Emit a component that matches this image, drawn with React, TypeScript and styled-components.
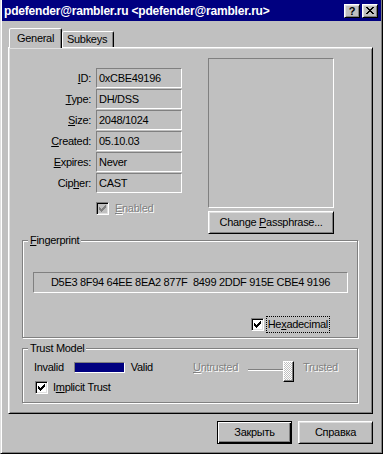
import React from "react";
import styled, { createGlobalStyle } from "styled-components";

const GlobalStyle = createGlobalStyle`
  html, body {
    margin: 0;
    padding: 0;
    background: #c0c0c0;
  }
  body {
    font-family: "Liberation Sans", Arial, sans-serif;
    font-size: 11px;
    letter-spacing: -0.3px;
    color: #000;
  }
  u {
    text-underline-offset: 1px;
  }
`;

const Window = styled.div`
  box-sizing: border-box;
  width: 383px;
  height: 454px;
  display: flex;
  flex-direction: column;
  background: #c0c0c0;
  border-left: 1px solid #dfdfdf;
  border-right: 1px solid #000;
  border-bottom: 1px solid #000;
  box-shadow: inset 1px 0 #fff, inset -1px -1px #808080;
  padding: 0 1px 1px 1px;
`;

const TitleBar = styled.div`
  height: 21px;
  display: flex;
  align-items: center;
  background: #000080;
  color: #fff;
  padding: 0 3px 0 2px;
`;

const Title = styled.span`
  font-weight: bold;
  font-size: 12px;
  letter-spacing: -0.2px;
  white-space: nowrap;
`;

const CaptionButtons = styled.div`
  margin-left: auto;
  display: flex;
  gap: 2px;
`;

const CaptionButton = styled.div`
  box-sizing: border-box;
  width: 16px;
  height: 14px;
  display: flex;
  align-items: center;
  justify-content: center;
  background: #c0c0c0;
  color: #000;
  font-weight: bold;
  font-size: 11px;
  border: 1px solid;
  border-color: #fff #000 #000 #fff;
  box-shadow: inset 1px 1px #dfdfdf, inset -1px -1px #808080;
`;

const Body = styled.div`
  flex: 1;
  display: flex;
  flex-direction: column;
  padding: 7px 8px 0 6px;
`;

const TabStrip = styled.div`
  height: 19px;
  display: flex;
  align-items: flex-end;
  padding-left: 1px;
`;

const Tab = styled.div<{ $active?: boolean; $width: number; $pad: number }>`
  box-sizing: border-box;
  width: ${(p) => p.$width}px;
  height: ${(p) => (p.$active ? 20 : 16)}px;
  margin-bottom: ${(p) => (p.$active ? -1 : 0)}px;
  position: relative;
  z-index: ${(p) => (p.$active ? 1 : 0)};
  padding: ${(p) => (p.$active ? 3 : 1)}px 0 0 ${(p) => p.$pad}px;
  line-height: 13px;
  background: #c0c0c0;
  border: 1px solid;
  border-bottom: none;
  border-color: #fff #000 transparent #fff;
  border-radius: 2px 2px 0 0;
  box-shadow: inset -1px 0 #808080;
`;

const Panel = styled.div`
  box-sizing: border-box;
  width: 365px;
  height: 367px;
  border: 1px solid;
  border-color: #fff #000 #000 #fff;
  box-shadow: inset 1px 1px #dfdfdf, inset -1px -1px #808080;
  padding: 10px 14px 0 13px;
`;

const TopRow = styled.div`
  display: flex;
`;

const InfoColumn = styled.div`
  width: 186px;
  display: flex;
  flex-direction: column;
`;

const FieldGrid = styled.div`
  margin-top: 10px;
  display: grid;
  grid-template-columns: 69px 86px;
  grid-auto-rows: 20px;
  column-gap: 5px;
  row-gap: 1px;
`;

const FieldLabel = styled.span`
  align-self: center;
  text-align: right;
  line-height: 13px;
  white-space: nowrap;
`;

const Field = styled.div<{ $center?: boolean }>`
  box-sizing: border-box;
  display: flex;
  align-items: center;
  justify-content: ${(p) => (p.$center ? "center" : "flex-start")};
  padding: 0 2px;
  line-height: 13px;
  white-space: pre;
  border: 1px solid;
  border-color: #808080 #fff #fff #808080;
`;

const CheckRow = styled.div<{ $gap: number }>`
  display: flex;
  align-items: center;
  gap: ${(p) => p.$gap}px;
  line-height: 13px;
`;

const EnabledRow = styled(CheckRow)`
  margin: 9px 0 0 74px;
`;

const ImplicitRow = styled(CheckRow)`
  margin-left: 1px;
`;

const Box = styled.span<{ $disabled?: boolean }>`
  box-sizing: border-box;
  width: 13px;
  height: 13px;
  display: flex;
  align-items: center;
  justify-content: center;
  background: ${(p) => (p.$disabled ? "#c0c0c0" : "#fff")};
  border: 1px solid;
  border-color: #808080 #fff #fff #808080;
  box-shadow: inset 1px 1px #000, inset -1px -1px #dfdfdf;
  flex-shrink: 0;
`;

const DisabledText = styled.span`
  color: #808080;
  text-shadow: 1px 1px 0 #fff;
  white-space: nowrap;
`;

const PhotoColumn = styled.div`
  width: 126px;
  display: flex;
  flex-direction: column;
  gap: 3px;
`;

const Photo = styled.div`
  box-sizing: border-box;
  height: 150px;
  border: 1px solid;
  border-color: #808080 #fff #fff #808080;
`;

const Button = styled.div<{ $default?: boolean; $width?: number }>`
  box-sizing: border-box;
  width: ${(p) => (p.$width ? `${p.$width}px` : "auto")};
  height: 23px;
  display: flex;
  align-items: center;
  justify-content: center;
  line-height: 13px;
  white-space: nowrap;
  background: #c0c0c0;
  border: 1px solid;
  border-color: ${(p) => (p.$default ? "#000" : "#fff #000 #000 #fff")};
  box-shadow: ${(p) =>
    p.$default
      ? "inset 1px 1px #fff, inset -1px -1px #000, inset -2px -2px #808080"
      : "inset 1px 1px #dfdfdf, inset -1px -1px #808080"};
`;

const GroupBox = styled.div<{ $height: number; $gapTop: number }>`
  box-sizing: border-box;
  height: ${(p) => p.$height}px;
  margin-top: ${(p) => p.$gapTop}px;
  display: flex;
  flex-direction: column;
  border: 1px solid #808080;
  box-shadow: inset 1px 1px #fff, 1px 1px #fff;
`;

const Legend = styled.div`
  width: fit-content;
  margin: -7px 0 0 5px;
  padding: 0 2px;
  line-height: 13px;
  background: #c0c0c0;
`;

const FingerprintField = styled(Field)`
  height: 21px;
  margin: 25px 9px 0 10px;
`;

const HexRow = styled(CheckRow)`
  margin: 24px 28px 0 0;
  justify-content: flex-end;
`;

const FocusLabel = styled.span`
  padding: 1px 1px;
  outline: 1px dotted #000;
  outline-offset: 0;
  white-space: nowrap;
`;

const TrustBody = styled.div`
  display: flex;
  margin: 6px 0 0 11px;
`;

const TrustLeft = styled.div`
  width: 159px;
  display: flex;
  flex-direction: column;
  gap: 7px;
`;

const TrustRow = styled.div`
  display: flex;
  align-items: center;
  height: 13px;
  line-height: 13px;
`;

const ValidityBar = styled.span`
  box-sizing: border-box;
  width: 51px;
  height: 11px;
  margin: 0 6px 0 10px;
  background: #000080;
  border: 1px solid;
  border-color: #808080 #fff #fff #808080;
`;

const TrustRight = styled.div`
  display: flex;
  align-items: flex-start;
  line-height: 13px;
`;

const Slider = styled.div`
  width: 46px;
  height: 21px;
  display: flex;
  margin: 0 9px 0 10px;
`;

const Track = styled.div`
  flex: 1;
  box-sizing: border-box;
  height: 2px;
  margin-top: 8px;
  border-top: 1px solid #808080;
  border-bottom: 1px solid #fff;
`;

const Thumb = styled.div`
  box-sizing: border-box;
  width: 11px;
  height: 21px;
  margin-left: -1px;
  border: 1px solid;
  border-color: #fff #000 #000 #fff;
  box-shadow: inset -1px -1px #808080;
  background: repeating-conic-gradient(#fff 0 25%, #c0c0c0 0 50%) 0 0 / 2px 2px;
`;

const Footer = styled.div`
  display: flex;
  justify-content: flex-end;
  gap: 6px;
  padding-top: 7px;
`;

const CHECK_ROWS = ["......#", ".....##", "#...###", "##.###.", "#####..", ".###...", "..#...."];

const CheckMark = ({ color = "#000" }: { color?: string }) => (
  <svg width="7" height="7" viewBox="0 0 7 7" shapeRendering="crispEdges">
    {CHECK_ROWS.flatMap((row, y) =>
      row.split("").map((c, x) => (c === "#" ? <rect key={`${x}-${y}`} x={x} y={y} width="1" height="1" fill={color} /> : null))
    )}
  </svg>
);

const CloseGlyph = () => (
  <svg width="8" height="7" viewBox="0 0 8 7" shapeRendering="crispEdges">
    <path d="M0 0h2v1h1v1h2V1h1V0h2v1H7v1H6v1H5v1h1v1h1v1h1v1H6V6H5V5H3v1H2v1H0V6h1V5h1V4h1V3H2V2H1V1H0z" fill="#000" />
  </svg>
);

const fields: [React.ReactNode, string][] = [
  [<><u>I</u>D:</>, "0xCBE49196"],
  [<><u>T</u>ype:</>, "DH/DSS"],
  [<><u>S</u>ize:</>, "2048/1024"],
  [<><u>C</u>reated:</>, "05.10.03"],
  [<><u>E</u>xpires:</>, "Never"],
  [<>Cip<u>h</u>er:</>, "CAST"],
];

export default function App() {
  return (
    <>
      <GlobalStyle />
      <Window>
        <TitleBar>
          <Title>pdefender@rambler.ru &lt;pdefender@rambler.ru&gt;</Title>
          <CaptionButtons>
            <CaptionButton>?</CaptionButton>
            <CaptionButton>
              <CloseGlyph />
            </CaptionButton>
          </CaptionButtons>
        </TitleBar>
        <Body>
          <TabStrip>
            <Tab $active $width={53} $pad={7}>
              General
            </Tab>
            <Tab $width={52} $pad={4}>
              Subkeys
            </Tab>
          </TabStrip>
          <Panel>
            <TopRow>
              <InfoColumn>
                <FieldGrid>
                  {fields.map(([label, value], i) => (
                    <React.Fragment key={i}>
                      <FieldLabel>{label}</FieldLabel>
                      <Field>{value}</Field>
                    </React.Fragment>
                  ))}
                </FieldGrid>
                <EnabledRow $gap={6}>
                  <Box $disabled>
                    <CheckMark color="#808080" />
                  </Box>
                  <DisabledText>
                    <u>E</u>nabled
                  </DisabledText>
                </EnabledRow>
              </InfoColumn>
              <PhotoColumn>
                <Photo />
                <Button>
                  Change&nbsp;<u>P</u>assphrase...
                </Button>
              </PhotoColumn>
            </TopRow>

            <GroupBox $height={98} $gapTop={6}>
              <Legend>
                <u>F</u>ingerprint
              </Legend>
              <FingerprintField $center>D5E3 8F94 64EE 8EA2 877F  8499 2DDF 915E CBE4 9196</FingerprintField>
              <HexRow $gap={3}>
                <Box>
                  <CheckMark />
                </Box>
                <FocusLabel>
                  He<u>x</u>adecimal
                </FocusLabel>
              </HexRow>
            </GroupBox>

            <GroupBox $height={55} $gapTop={10}>
              <Legend>Trust Model</Legend>
              <TrustBody>
                <TrustLeft>
                  <TrustRow>
                    Invalid
                    <ValidityBar />
                    Valid
                  </TrustRow>
                  <ImplicitRow $gap={5}>
                    <Box>
                      <CheckMark />
                    </Box>
                    <span>
                      I<u>m</u>plicit Trust
                    </span>
                  </ImplicitRow>
                </TrustLeft>
                <TrustRight>
                  <DisabledText>
                    <u>U</u>ntrusted
                  </DisabledText>
                  <Slider>
                    <Track />
                    <Thumb />
                  </Slider>
                  <DisabledText>Trusted</DisabledText>
                </TrustRight>
              </TrustBody>
            </GroupBox>
          </Panel>
          <Footer>
            <Button $default $width={75}>
              Закрыть
            </Button>
            <Button $width={75}>Справка</Button>
          </Footer>
        </Body>
      </Window>
    </>
  );
}
